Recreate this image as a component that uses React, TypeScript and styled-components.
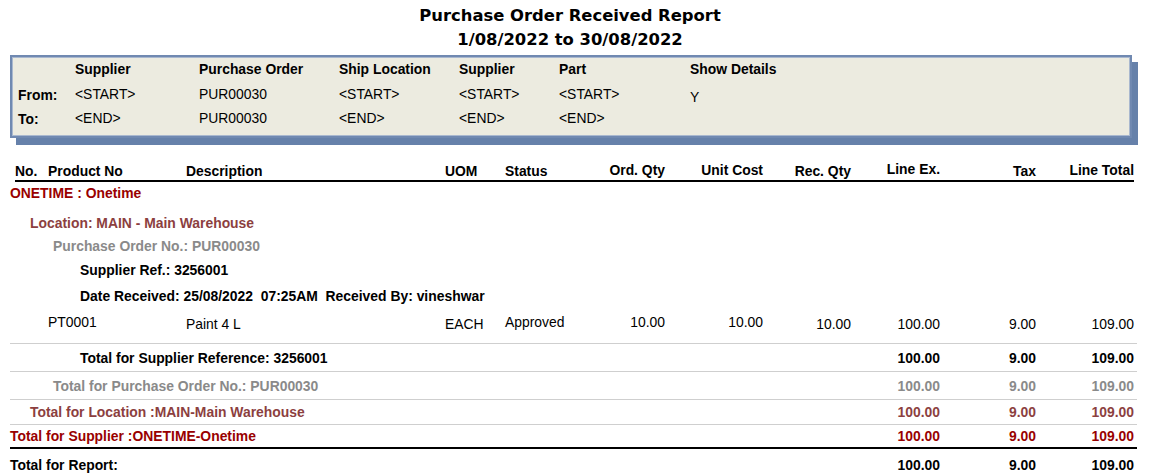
import React from "react";
import styled, { createGlobalStyle } from "styled-components";

const GlobalStyle = createGlobalStyle`
  html, body { margin: 0; padding: 0; background: #ffffff; }
  body { font-family: "Liberation Sans", Arial, sans-serif; font-size: 13.9px; color: #000; }
`;

const COLS = "138px 259px 60px 75px 85px 98px 88px 89px 96px 98px";

const Page = styled.div`
  width: 1140px;
  display: flex;
  flex-direction: column;
`;

const Title = styled.h1`
  margin: 0;
  padding-top: 4px;
  font-family: "DejaVu Sans", Verdana, sans-serif;
  font-weight: bold;
  font-size: 16.4px;
  line-height: 24px;
  text-align: center;
`;

const ParamBox = styled.div`
  margin: 3px 0 0 10px;
  width: 1122px;
  height: 83px;
  box-sizing: border-box;
  background: #ecebe0;
  border: 2px solid #7089b1;
  box-shadow: inset 0 0 0 1px #a9b8cf, 6px 7px 0 #6681aa;
  display: grid;
  grid-template-columns: 63px 124px 140px 120px 100px 131px 1fr;
  grid-template-rows: 23px 27px 22px;
  align-items: center;
`;

const ParamCell = styled.div<{ $bold?: boolean; $label?: boolean; $shift?: number }>`
  font-weight: ${(p) => (p.$bold ? "bold" : "normal")};
  padding-left: ${(p) => (p.$label ? "6px" : "0")};
  padding-top: ${(p) => (p.$shift ? `${p.$shift}px` : "0")};
  white-space: nowrap;
`;

const Report = styled.div`
  margin-top: 24px;
  display: flex;
  flex-direction: column;
`;

const HeaderRow = styled.div`
  margin-left: 15px;
  width: 1119px;
  height: 18px;
  display: grid;
  grid-template-columns: 33px ${COLS};
  align-items: center;
  border-bottom: 2px solid #000;
  font-weight: bold;
`;

const HeadCell = styled.div<{ $right?: boolean; $up?: number }>`
  text-align: ${(p) => (p.$right ? "right" : "left")};
  white-space: nowrap;
  transform: translateY(${(p) => (p.$up ? -p.$up : 0)}px);
`;

const GroupRow = styled.div<{ $indent: number; $color: string; $h: number; $mt: number }>`
  margin-left: 10px;
  margin-top: ${(p) => p.$mt}px;
  height: ${(p) => p.$h}px;
  display: flex;
  align-items: center;
  padding-left: ${(p) => p.$indent}px;
  color: ${(p) => p.$color};
  font-weight: bold;
  white-space: pre;
`;

const DetailRow = styled.div`
  margin: 4px 0 0 10px;
  width: 1127px;
  height: 33px;
  box-sizing: border-box;
  display: grid;
  grid-template-columns: 38px ${COLS} 3px;
  align-items: start;
  border-bottom: 1px solid #cfcfcf;
`;

const Cell = styled.div<{ $right?: boolean; $low?: boolean }>`
  line-height: 22px;
  text-align: ${(p) => (p.$right ? "right" : "left")};
  padding-top: ${(p) => (p.$low ? "2px" : "0")};
  white-space: nowrap;
`;

const TotalRow = styled.div<{ $color: string; $h: number; $thick?: boolean; $noline?: boolean }>`
  margin-left: 10px;
  width: 1127px;
  height: ${(p) => p.$h}px;
  box-sizing: border-box;
  display: grid;
  grid-template-columns: 38px ${COLS} 3px;
  align-items: center;
  color: ${(p) => p.$color};
  font-weight: bold;
  border-bottom: ${(p) =>
    p.$noline ? "none" : p.$thick ? "2px solid #000" : "1px solid #cfcfcf"};
`;

const TotalLabel = styled.div<{ $indent: number }>`
  grid-column: 1 / 9;
  padding-left: ${(p) => p.$indent}px;
  white-space: nowrap;
`;

const Num = styled.div`
  text-align: right;
  white-space: nowrap;
`;

const C_SUPP = "#990000";
const C_LOC = "#8c3f3f";
const C_PO = "#8a8a8a";
const C_BLACK = "#000000";

const totals = [
  { label: "Total for Supplier Reference: 3256001", indent: 70, color: C_BLACK, h: 28 },
  { label: "Total for Purchase Order No.: PUR00030", indent: 43, color: C_PO, h: 28 },
  { label: "Total for Location :MAIN-Main Warehouse", indent: 20, color: C_LOC, h: 25 },
  { label: "Total for Supplier :ONETIME-Onetime", indent: 0, color: C_SUPP, h: 24, thick: true },
  { label: "Total for Report:", indent: 0, color: C_BLACK, h: 31, noline: true },
];

export default function App() {
  return (
    <Page>
      <GlobalStyle />
      <Title>
        Purchase Order Received Report
        <br />
        1/08/2022 to 30/08/2022
      </Title>

      <ParamBox>
        <ParamCell />
        <ParamCell $bold>Supplier</ParamCell>
        <ParamCell $bold>Purchase Order</ParamCell>
        <ParamCell $bold>Ship Location</ParamCell>
        <ParamCell $bold>Supplier</ParamCell>
        <ParamCell $bold>Part</ParamCell>
        <ParamCell $bold>Show Details</ParamCell>

        <ParamCell $bold $label $shift={2}>From:</ParamCell>
        <ParamCell>&lt;START&gt;</ParamCell>
        <ParamCell>PUR00030</ParamCell>
        <ParamCell>&lt;START&gt;</ParamCell>
        <ParamCell>&lt;START&gt;</ParamCell>
        <ParamCell>&lt;START&gt;</ParamCell>
        <ParamCell $shift={7}>Y</ParamCell>

        <ParamCell $bold $label $shift={2}>To:</ParamCell>
        <ParamCell>&lt;END&gt;</ParamCell>
        <ParamCell>PUR00030</ParamCell>
        <ParamCell>&lt;END&gt;</ParamCell>
        <ParamCell>&lt;END&gt;</ParamCell>
        <ParamCell>&lt;END&gt;</ParamCell>
        <ParamCell />
      </ParamBox>

      <Report>
        <HeaderRow>
          <HeadCell>No.</HeadCell>
          <HeadCell>Product No</HeadCell>
          <HeadCell>Description</HeadCell>
          <HeadCell>UOM</HeadCell>
          <HeadCell>Status</HeadCell>
          <HeadCell $right $up={1}>Ord. Qty</HeadCell>
          <HeadCell $right $up={1}>Unit Cost</HeadCell>
          <HeadCell $right>Rec. Qty</HeadCell>
          <HeadCell $right $up={2}>Line Ex.</HeadCell>
          <HeadCell $right>Tax</HeadCell>
          <HeadCell $right $up={1}>Line Total</HeadCell>
        </HeaderRow>

        <GroupRow $indent={0} $color={C_SUPP} $h={24} $mt={-1}>ONETIME : Onetime</GroupRow>
        <GroupRow $indent={20} $color={C_LOC} $h={22} $mt={7}>Location: MAIN - Main Warehouse</GroupRow>
        <GroupRow $indent={43} $color={C_PO} $h={22} $mt={1}>Purchase Order No.: PUR00030</GroupRow>
        <GroupRow $indent={70} $color={C_BLACK} $h={22} $mt={2}>Supplier Ref.: 3256001</GroupRow>
        <GroupRow $indent={70} $color={C_BLACK} $h={22} $mt={4}>
          {"Date Received: 25/08/2022  07:25AM  Received By: vineshwar"}
        </GroupRow>

        <DetailRow>
          <Cell />
          <Cell>PT0001</Cell>
          <Cell $low>Paint 4 L</Cell>
          <Cell $low>EACH</Cell>
          <Cell>Approved</Cell>
          <Cell $right>10.00</Cell>
          <Cell $right>10.00</Cell>
          <Cell $right $low>10.00</Cell>
          <Cell $right $low>100.00</Cell>
          <Cell $right $low>9.00</Cell>
          <Cell $right $low>109.00</Cell>
          <Cell />
        </DetailRow>

        {totals.map((t) => (
          <TotalRow key={t.label} $color={t.color} $h={t.h} $thick={t.thick} $noline={t.noline}>
            <TotalLabel $indent={t.indent}>{t.label}</TotalLabel>
            <Num>100.00</Num>
            <Num>9.00</Num>
            <Num>109.00</Num>
          </TotalRow>
        ))}
      </Report>
    </Page>
  );
}
